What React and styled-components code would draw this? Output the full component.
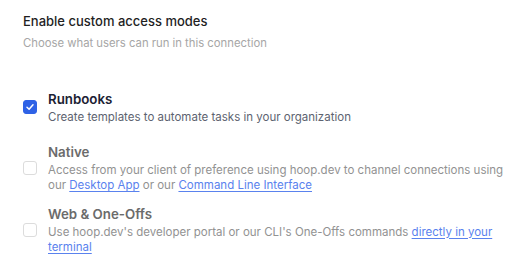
import React from 'react'
import styled, { createGlobalStyle } from 'styled-components'

const GlobalStyle = createGlobalStyle`
  body {
    margin: 0;
    background: #ffffff;
    font-family: Inter, "Noto Sans", sans-serif;
  }
`

const Page = styled.div`
  padding: 11px 23px 0 23px;
  width: 485px;
`

const Heading = styled.h2`
  margin: 0;
  font-size: 13px;
  font-weight: 500;
  line-height: 20px;
  color: #1f1f1f;
`

const Subheading = styled.p`
  margin: 3px 0 0;
  font-size: 11.3px;
  line-height: 18px;
  color: #a6a6a6;
`

const List = styled.div`
  margin-top: 37px;
  display: flex;
  flex-direction: column;
`

const Option = styled.label`
  display: flex;
  align-items: center;
  gap: 11px;
  margin-bottom: ${p => p.$spacing}px;
`

const Box = styled.span`
  flex: none;
  width: 14px;
  height: 14px;
  border-radius: 3px;
  box-sizing: border-box;
  display: flex;
  align-items: center;
  justify-content: center;
  background: ${p => (p.$checked ? '#2f62e6' : '#ffffff')};
  border: 1px solid ${p => (p.$checked ? '#2f62e6' : '#dcdcdc')};
`

const Text = styled.div`
  display: flex;
  flex-direction: column;
`

const Title = styled.span`
  font-size: 13.3px;
  font-weight: 600;
  line-height: 20px;
  color: ${p => (p.$disabled ? '#6b6b6b' : '#1c2233')};
`

const Description = styled.span`
  font-size: 11.5px;
  line-height: 15.5px;
  margin-top: 1px;
  color: ${p => (p.$disabled ? '#929292' : '#5d6370')};
`

const Link = styled.a`
  color: #5a82ee;
  text-decoration: underline;
  text-underline-offset: 2px;
`

const Check = () => (
  <svg width="10" height="10" viewBox="0 0 10 10" fill="none">
    <path d="M2 5.2 L4.1 7.2 L8 2.8" stroke="#fff" strokeWidth="1.5" strokeLinecap="round" strokeLinejoin="round" />
  </svg>
)

export default function App() {
  return (
    <>
      <GlobalStyle />
      <Page>
        <Heading>Enable custom access modes</Heading>
        <Subheading>Choose what users can run in this connection</Subheading>
        <List>
          <Option $spacing={16}>
            <Box $checked><Check /></Box>
            <Text>
              <Title>Runbooks</Title>
              <Description>Create templates to automate tasks in your organization</Description>
            </Text>
          </Option>
          <Option $spacing={10}>
            <Box />
            <Text>
              <Title $disabled>Native</Title>
              <Description $disabled>
                Access from your client of preference using hoop.dev to channel connections using
                our <Link href="#">Desktop App</Link> or our <Link href="#">Command Line Interface</Link>
              </Description>
            </Text>
          </Option>
          <Option $spacing={0}>
            <Box />
            <Text>
              <Title $disabled>Web &amp; One-Offs</Title>
              <Description $disabled>
                Use hoop.dev's developer portal or our CLI's One-Offs commands{' '}
                <Link href="#">directly in your terminal</Link>
              </Description>
            </Text>
          </Option>
        </List>
      </Page>
    </>
  )
}
